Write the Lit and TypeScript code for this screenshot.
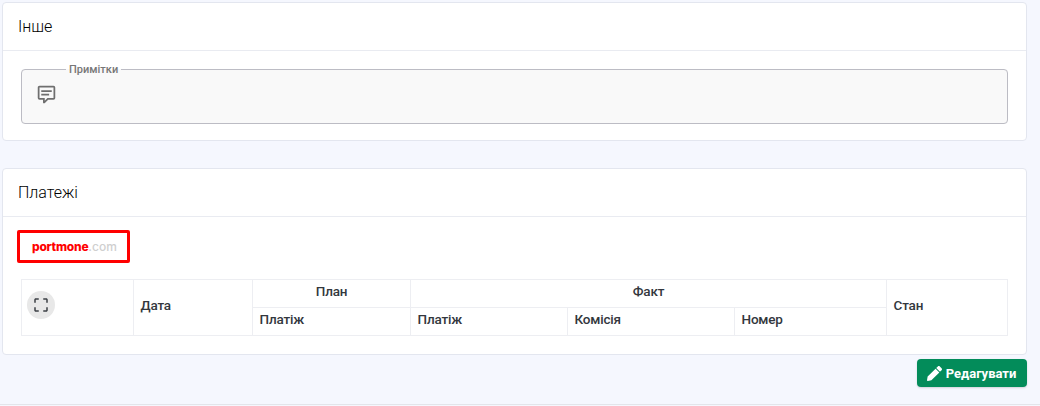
import { LitElement, html, css } from "lit";
import { customElement } from "lit/decorators.js";

@customElement("app-root")
export class AppRoot extends LitElement {
  static styles = css`
    :host { display: block; height: 406px; overflow: hidden; background: #f5f7fe; font-family: Roboto, "Liberation Sans", sans-serif; color: #212529; box-sizing: border-box; }
    * { box-sizing: border-box; }
    .page { display: flex; flex-direction: column; padding: 2px 13px 0 2px; height: 406px; }
    .card { background: #fff; border: 1px solid #e3e6ef; border-radius: 4px; }
    .card + .card { margin-top: 27px; }
    .title { height: 48px; padding: 0 15px 1px; display: flex; align-items: center; font-size: 16px; font-weight: 300; border-bottom: 1px solid #e9ebf1; color: #000; }
    .other-body { padding: 12px 18px 16px 18px; }
    fieldset { margin: 0; padding: 0 0 0 14px; height: 61px; border: 1px solid #bcbcc4; border-radius: 4px; background: #f9f9f9; min-width: 0; display: block; }
    legend { margin-left: 30px; padding: 0 3px; font-size: 11px; font-weight: 500; line-height: 13px; color: #777; }
    fieldset svg { display: block; width: 21px; height: 21px; margin-top: 8px; fill: #6f6f6f; }
    .pay-body { padding: 13px 18px 18px 14px; }
    .logo { width: 113px; height: 33px; border: 3px solid #f00; border-radius: 2px; display: flex; align-items: center; padding-left: 12px; font-family: Inter, sans-serif; font-size: 12px; font-weight: 800; letter-spacing: -0.25px; color: #f00; }
    .logo span { color: #cfcfcf; font-weight: 500; letter-spacing: 0; }
    table { margin: 16px 0 0 4px; border-collapse: collapse; table-layout: fixed; width: 986px; font-size: 13.5px; font-weight: 500; letter-spacing: -0.2px; }
    th { border: 1px solid #edeef2; padding: 0 6.5px 6px; height: 28px; font-weight: 500; text-align: left; color: #33373d; }
    th.c { text-align: center; }
    .fs { width: 28px; height: 28px; border-radius: 50%; background: #e8e8e8; display: flex; align-items: center; justify-content: center; margin-left: -1.5px; }
    .fs svg { width: 18px; height: 18px; fill: #3b3f44; display: block; }
    .actions { display: flex; justify-content: flex-end; margin-top: 4px; }
    button { width: 110px; height: 28px; border: 0; border-radius: 4px; background: #038c5a; color: #fff; font: 700 13px Roboto, sans-serif; display: flex; align-items: center; justify-content: center; gap: 4px; padding: 0 1px 0 0; box-shadow: 0 1px 2px rgba(0,0,0,.15); }
    button svg { width: 15px; height: 15px; fill: #fff; display: block; }
    .foot { margin: auto -13px 1px -2px; border-top: 1px solid #e3e5ea; }
  `;

  render() {
    return html`<div class="page">
      <section class="card">
        <div class="title">Інше</div>
        <div class="other-body">
          <fieldset>
            <legend>Примітки</legend>
            <svg viewBox="0 0 24 24"><path d="M9,22A1,1 0 0,1 8,21V18H4A2,2 0 0,1 2,16V4C2,2.89 2.9,2 4,2H20A2,2 0 0,1 22,4V16A2,2 0 0,1 20,18H13.9L10.2,21.71C10,21.9 9.75,22 9.5,22V22H9M10,16V19.08L13.08,16H20V4H4V16H10M6,7H18V9H6V7M6,11H15V13H6V11Z"/></svg>
          </fieldset>
        </div>
      </section>
      <section class="card">
        <div class="title">Платежі</div>
        <div class="pay-body">
          <div class="logo">portmone<span>.com</span></div>
          <table>
            <colgroup><col style="width:112px"/><col style="width:119px"/><col style="width:158px"/><col style="width:157px"/><col style="width:167px"/><col style="width:152px"/><col style="width:121px"/></colgroup>
            <tr>
              <th rowspan="2"><div class="fs"><svg viewBox="0 0 24 24"><path d="M3 5v4h2V5h4V3H5c-1.1 0-2 .9-2 2zm2 10H3v4c0 1.1.9 2 2 2h4v-2H5v-4zm14 4h-4v2h4c1.1 0 2-.9 2-2v-4h-2v4zm0-16h-4v2h4v4h2V5c0-1.1-.9-2-2-2z"/></svg></div></th>
              <th rowspan="2">Дата</th>
              <th class="c">План</th>
              <th class="c" colspan="3">Факт</th>
              <th rowspan="2">Стан</th>
            </tr>
            <tr><th>Платіж</th><th>Платіж</th><th>Комісія</th><th>Номер</th></tr>
          </table>
        </div>
      </section>
      <div class="actions">
        <button><svg viewBox="0 0 512 512"><path d="M497.9 142.1l-46.1 46.1c-4.7 4.7-12.3 4.7-17 0l-111-111c-4.7-4.7-4.7-12.3 0-17l46.1-46.1c18.7-18.7 49.1-18.7 67.9 0l60.1 60.1c18.8 18.7 18.8 49.1 0 67.9zM284.2 99.8L21.6 362.4.4 483.9c-2.9 16.4 11.4 30.6 27.8 27.8l121.5-21.3 262.6-262.6c4.7-4.7 4.7-12.3 0-17l-111-111c-4.8-4.7-12.4-4.7-17.1 0z"/></svg>Редагувати</button>
      </div>
      <div class="foot"></div>
    </div>`;
  }
}
